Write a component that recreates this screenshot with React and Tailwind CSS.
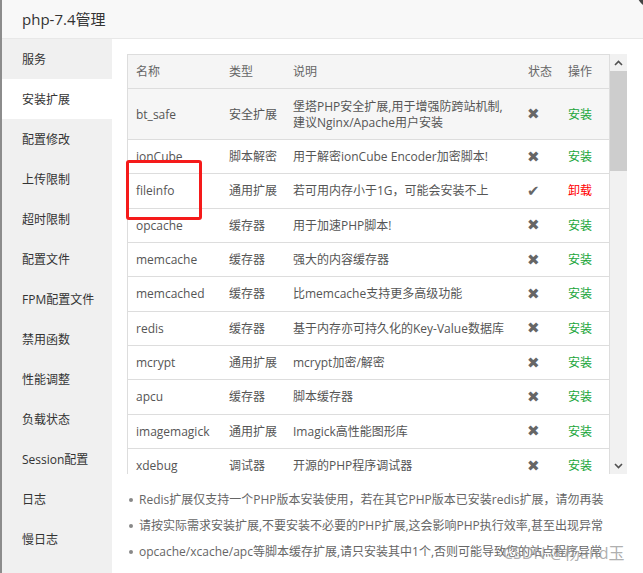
import React from 'react';

const menu = ['服务', '安装扩展', '配置修改', '上传限制', '超时限制', '配置文件', 'FPM配置文件', '禁用函数', '性能调整', '负载状态', 'Session配置', '日志', '慢日志'];

const exts = [
    { name: 'bt_safe', type: '安全扩展', desc: ['堡塔PHP安全扩展,用于增强防跨站机制,', '建议Nginx/Apache用户安装'], tall: true },
    { name: 'ionCube', type: '脚本解密', desc: ['用于解密ionCube Encoder加密脚本!'] },
    { name: 'fileinfo', type: '通用扩展', desc: ['若可用内存小于1G，可能会安装不上'], installed: true },
    { name: 'opcache', type: '缓存器', desc: ['用于加速PHP脚本!'] },
    { name: 'memcache', type: '缓存器', desc: ['强大的内容缓存器'] },
    { name: 'memcached', type: '缓存器', desc: ['比memcache支持更多高级功能'] },
    { name: 'redis', type: '缓存器', desc: ['基于内存亦可持久化的Key-Value数据库'] },
    { name: 'mcrypt', type: '通用扩展', desc: ['mcrypt加密/解密'] },
    { name: 'apcu', type: '缓存器', desc: ['脚本缓存器'] },
    { name: 'imagemagick', type: '通用扩展', desc: ['Imagick高性能图形库'] },
    { name: 'xdebug', type: '调试器', desc: ['开源的PHP程序调试器'] },
];

const tips = [
    'Redis扩展仅支持一个PHP版本安装使用，若在其它PHP版本已安装redis扩展，请勿再装',
    '请按实际需求安装扩展,不要安装不必要的PHP扩展,这会影响PHP执行效率,甚至出现异常',
    'opcache/xcache/apc等脚本缓存扩展,请只安装其中1个,否则可能导致您的站点程序异常',
];

const font = { fontFamily: '"Open Sans", "Noto Sans CJK SC", sans-serif' };

const Chevron = ({ up }) => (
    <svg width="9" height="6" viewBox="0 0 9 6">
        <path d={up ? 'M1 5 L4.5 1.5 L8 5' : 'M1 1 L4.5 4.5 L8 1'} fill="none" stroke="#505050" strokeWidth="1.6" />
    </svg>
);

export default function App() {
    return (
        <div className="relative w-[643px] h-[573px] overflow-hidden bg-white flex text-[12px]" style={font}>
            <div className="w-[2px] h-full bg-[#8c8c8c]" />
            <div className="flex-1 flex flex-col">
                <div className="h-[39px] shrink-0 bg-[#f8f8f8] border-b border-[#e8e8e8] pl-5 flex items-center text-[15px] text-[#333]">
                    php-7.4管理
                </div>
                <div className="flex flex-1">
                    <div className="w-[110px] bg-[#f0f0f0] flex flex-col">
                        {menu.map((m, i) => (
                            <div key={m} className={`h-10 pl-5 pt-[2px] flex items-center text-[12px] text-[#333] ${i === 1 ? 'bg-white' : ''}`}>
                                {m}
                            </div>
                        ))}
                    </div>
                    <div className="flex-1 pt-[15px] pl-[15px]">
                        <div className="flex w-[500px] h-[420px] overflow-hidden">
                            <div className="w-[483px] border border-[#ddd] border-b-0 self-start text-[#555]">
                                <div className="h-[33px] pt-px bg-[#f5f5f5] flex items-center text-[#666]">
                                    <div className="w-[93px] pl-2">名称</div>
                                    <div className="w-[64px] pl-2">类型</div>
                                    <div className="w-[235px] pl-2">说明</div>
                                    <div className="w-[40px] pl-2">状态</div>
                                    <div className="w-[49px] pl-2">操作</div>
                                </div>
                                {exts.map((e) => (
                                    <div
                                        key={e.name}
                                        className={`flex items-center pt-px border-t border-[#ddd] ${e.tall ? 'h-[51px] bg-[#f6f6f6]' : 'h-[34.33px]'}`}
                                    >
                                        <div className="w-[93px] pl-2">{e.name}</div>
                                        <div className="w-[64px] pl-2">{e.type}</div>
                                        <div className="w-[235px] pl-2 leading-[16px]">
                                            {e.desc.map((d) => (
                                                <div key={d}>{d}</div>
                                            ))}
                                        </div>
                                        <div className="w-[40px] pl-[7px] text-[#666] text-[15px] leading-none" style={{ fontFamily: '"DejaVu Sans", sans-serif' }}>
                                            {e.installed ? '✔' : '✖'}
                                        </div>
                                        <div className={`w-[49px] pl-2 ${e.installed ? 'text-[#ff0000]' : 'text-[#20a53a]'}`}>
                                            {e.installed ? '卸载' : '安装'}
                                        </div>
                                    </div>
                                ))}
                            </div>
                            <div className="w-[17px] h-full bg-[#f1f1f1] flex flex-col">
                                <div className="h-[17px] flex items-center justify-center">
                                    <Chevron up />
                                </div>
                                <div className="h-[100px] bg-[#cdcdcd]" />
                                <div className="flex-1" />
                                <div className="h-[17px] flex items-center justify-center">
                                    <Chevron />
                                </div>
                            </div>
                        </div>
                        <ul className="mt-[13px] text-[#666]">
                            {tips.map((t) => (
                                <li key={t} className="h-[26px] flex items-center whitespace-nowrap">
                                    <span className="w-[4px] h-[4px] rounded-full bg-[#888] ml-[2px] mr-[6px]" />
                                    {t}
                                </li>
                            ))}
                        </ul>
                    </div>
                </div>
            </div>
            <div className="absolute left-[126px] top-[160px] w-[76px] h-[60px] border-[3px] border-[#f51a1a] rounded-[3px]" />
            <div className="absolute left-[503px] top-[541px] text-[16px] text-[#9a9a9a]/80">CSDN @杨and玉</div>
            <div className="absolute left-[637px] top-[-22px] w-[30px] h-[30px] rounded-full bg-[#444]" />
        </div>
    );
}
